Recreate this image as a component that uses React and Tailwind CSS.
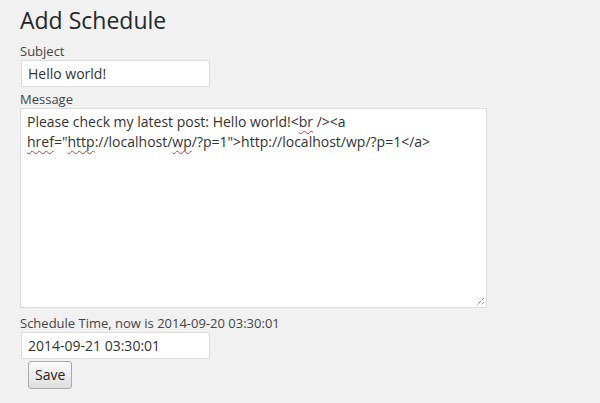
const wavy = 'underline decoration-wavy decoration-[#e33] decoration-1 underline-offset-[3px]'

function Field({ value }) {
  return (
    <div className="ml-px w-[189px] h-[27px] border border-[#ddd] bg-white px-[6px] text-[14px] leading-[25px] text-[#333]">
      {value}
    </div>
  )
}

export default function App() {
  return (
    <div
      className="h-[403px] bg-[#f1f1f1] pl-5 text-[#444]"
      style={{ fontFamily: '"Open Sans", sans-serif' }}
    >
      <h2 className="pt-[6px] pb-[7px] text-[23px] leading-[29px] text-[#23282d]">Add Schedule</h2>

      <label className="block text-[13px] leading-[18px]">Subject</label>
      <Field value="Hello world!" />

      <label className="mt-[3px] block text-[13px] leading-[18px]">Message</label>
      <div className="relative h-[200px] w-[467px] border border-[#ddd] bg-white px-[6px] py-[3px] text-[14px] leading-[20px] text-[#333]">
        Please check my latest post: Hello world!&lt;<span className={wavy}>br</span> /&gt;&lt;a{' '}
        <span className={wavy}>href</span>="<span className={wavy}>http</span>://localhost/<span className={wavy}>wp</span>/?p=1"&gt;http://localhost/wp/?p=1&lt;/a&gt;
        <svg className="absolute bottom-[1px] right-[1px]" width="10" height="10" viewBox="0 0 10 10">
          <path d="M9 2 L2 9 M9 6 L6 9" stroke="#555" strokeWidth="1" strokeDasharray="1 1" />
        </svg>
      </div>

      <label className="mt-[6px] block text-[13px] leading-[18px]">Schedule Time, now is 2014-09-20 03:30:01</label>
      <Field value="2014-09-21 03:30:01" />

      <button className="ml-[8px] mt-[2px] h-[28px] rounded-[3px] border border-[#aaa] bg-gradient-to-b from-[#fbfbfb] to-[#dedede] px-[6px] text-[14px] leading-[26px] text-[#222]">
        Save
      </button>
    </div>
  )
}
